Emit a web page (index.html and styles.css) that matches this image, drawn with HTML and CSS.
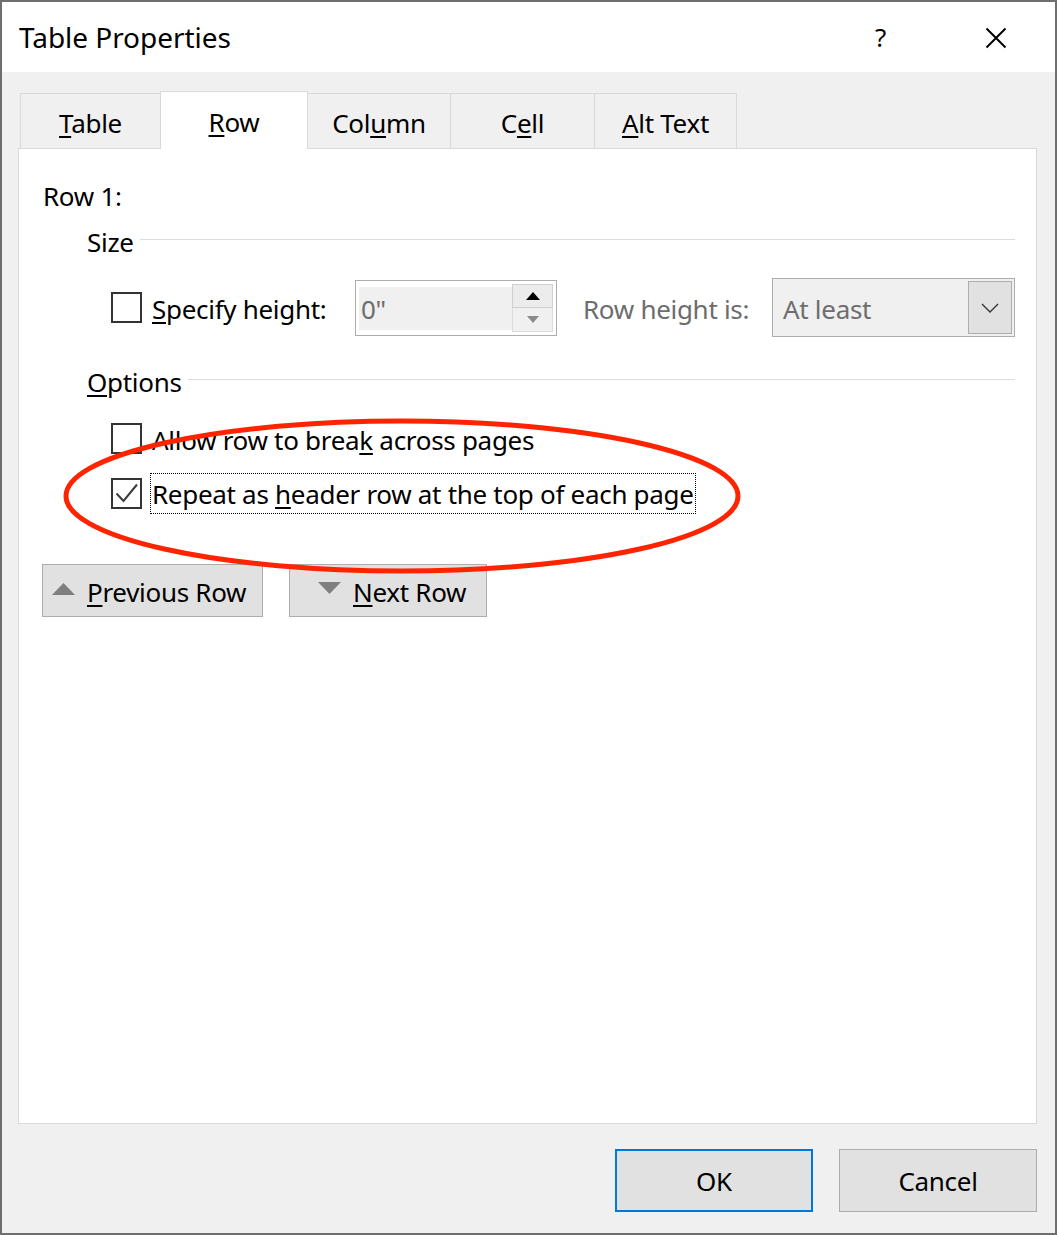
FILE: index.html
```html
<!DOCTYPE html>
<html>
<head>
<meta charset="utf-8">
<link rel="stylesheet" href="styles.css">
</head>
<body>
<div class="dialog">
  <div class="titlebar">
    <span class="title">Table Properties</span>
    <span class="help">?</span>
    <span class="close"><svg width="22" height="22" viewBox="0 0 22 22"><path d="M1.5 1.5 L20.5 20.5 M20.5 1.5 L1.5 20.5" stroke="#000" stroke-width="2" fill="none"/></svg></span>
  </div>
  <div class="body">
    <div class="tabs">
      <div class="tab t-table"><u>T</u>able</div>
      <div class="tab t-row active"><u>R</u>ow</div>
      <div class="tab t-col">Col<u>u</u>mn</div>
      <div class="tab t-cell">C<u>e</u>ll</div>
      <div class="tab t-alt"><u>A</u>lt Text</div>
    </div>
    <div class="panel">
      <div class="rowlabel">Row 1:</div>
      <div class="group">
        <div class="group-head size-head"><span>Size</span><span class="rule"></span></div>
        <div class="size-row">
          <div class="check size-check"><span class="box"></span><span class="lbl"><u>S</u>pecify height:</span></div>
          <div class="spin">
            <span class="spin-val">0"</span>
            <span class="spin-btns">
              <span class="spin-up"><svg width="14" height="8" viewBox="0 0 14 8"><path d="M0 8 L7 0 L14 8 Z" fill="#000"/></svg></span>
              <span class="spin-down"><svg width="12" height="7" viewBox="0 0 12 7"><path d="M0 0 L12 0 L6 7 Z" fill="#8a8a8a"/></svg></span>
            </span>
          </div>
          <span class="dim rh-label">Row height is:</span>
          <div class="select">
            <span class="select-val">At least</span>
            <span class="select-btn"><svg width="18" height="10" viewBox="0 0 18 10"><path d="M1 1 L9 9 L17 1" stroke="#333" stroke-width="1.3" fill="none"/></svg></span>
          </div>
        </div>
        <div class="group-head opt-head"><span><u>O</u>ptions</span><span class="rule"></span></div>
        <div class="check opt-check first"><span class="box"></span><span class="lbl">Allow row to brea<u>k</u> across pages</span></div>
        <div class="check opt-check second"><span class="box"><svg width="27" height="27" viewBox="0 0 27 27"><path d="M3.5 13.5 L10.5 21 L24 4.5" stroke="#3c3c3c" stroke-width="2" fill="none"/></svg></span><span class="lbl focus">Repeat as <u>h</u>eader row at the top of each page</span></div>
      </div>
      <div class="nav-row">
        <button class="navbtn prev"><svg width="23" height="12" viewBox="0 0 23 12"><path d="M0 12 L11.5 0 L23 12 Z" fill="#7f7f7f"/></svg><span><u>P</u>revious Row</span></button>
        <button class="navbtn next"><svg width="23" height="12" viewBox="0 0 23 12"><path d="M0 0 L23 0 L11.5 12 Z" fill="#7f7f7f"/></svg><span><u>N</u>ext Row</span></button>
      </div>
      <svg class="ellipse" width="690" height="166" viewBox="0 0 690 166"><ellipse cx="345" cy="83" rx="336" ry="75" fill="none" stroke="#ff2400" stroke-width="5"/></svg>
    </div>
    <div class="footer">
      <button class="btn ok">OK</button>
      <button class="btn cancel">Cancel</button>
    </div>
  </div>
</div>
</body>
</html>
```
FILE: styles.css
```css
* { box-sizing: border-box; }
html, body { margin: 0; padding: 0; }
body {
  background: #6e6e6e;
  font-family: "Noto Sans", "Open Sans", sans-serif;
  font-size: 26px;
  letter-spacing: -0.3px;
  color: #000;
  width: 1057px;
  height: 1235px;
  overflow: hidden;
}
u { text-decoration-thickness: 2px; text-underline-offset: 3px; }
.dialog {
  margin: 2px 0 0 2px;
  width: 1053px;
  height: 1231px;
  background: #f0f0f0;
  display: flex;
  flex-direction: column;
}
.titlebar {
  height: 70px;
  background: #fff;
  display: flex;
  align-items: center;
  padding-left: 17px;
}
.title { font-size: 28px; letter-spacing: -0.05px; flex: 1; }
.help { font-size: 26px; width: 110px; }
.close { width: 70px; display: flex; align-items: center; padding-top: 2px; }
.body {
  flex: 1;
  display: flex;
  flex-direction: column;
  padding: 19px 18px 21px 16px;
}
.tabs {
  display: flex;
  align-items: flex-end;
  padding-left: 2px;
  height: 57px;
  position: relative;
  z-index: 2;
}
.tab {
  height: 55px;
  border: 1px solid #d9d9d9;
  border-bottom: none;
  border-right: none;
  text-align: center;
  line-height: 56px;
  padding-top: 1px;
  background: #f0f0f0;
}
.tab.t-alt { border-right: 1px solid #d9d9d9; }
.tab.active {
  height: 58px;
  background: #fff;
  border-right: 1px solid #d9d9d9;
  margin-bottom: -1px;
  line-height: 60px;
  padding-top: 0;
}
.tab.active + .tab { border-left: none; }
.t-table { width: 140px; }
.t-row { width: 148px; }
.t-col { width: 142px; }
.t-cell { width: 144px; }
.t-alt { width: 143px; }
.panel {
  position: relative;
  height: 976px;
  background: #fff;
  border: 1px solid #d9d9d9;
  padding: 29px 21px 0 24px;
}
.rowlabel { line-height: 36px; }
.group { padding-left: 44px; }
.group-head {
  display: flex;
  align-items: center;
  line-height: 36px;
}
.group-head .rule {
  flex: 1;
  height: 1px;
  background: #dcdcdc;
  margin-left: 6px;
  margin-top: -5px;
}
.size-head { margin-top: 10px; }
.size-row {
  margin-top: 18px;
  height: 59px;
  display: flex;
  align-items: center;
}
.check {
  display: flex;
  align-items: center;
  padding-left: 24px;
}
.box {
  width: 31px;
  height: 31px;
  border: 2px solid #333;
  background: #fff;
  display: flex;
  align-items: center;
  justify-content: center;
  flex: none;
}
.lbl { margin-left: 10px; line-height: 37px; }
.size-check { width: 268px; }
.size-check .lbl { padding-top: 3px; }
.spin {
  width: 202px;
  height: 56px;
  border: 1px solid #adadad;
  background: #fff;
  padding: 3px;
  display: flex;
}
.spin-val {
  flex: 1;
  background: #f0f0f0;
  color: #6d6d6d;
  line-height: 44px;
  padding-left: 2px;
  margin: 3px 0 2px 0;
}
.spin-btns {
  width: 41px;
  display: flex;
  flex-direction: column;
}
.spin-up, .spin-down {
  flex: 1;
  display: flex;
  align-items: center;
  justify-content: center;
  border: 1px solid #dcdcdc;
  background: #f0f0f0;
}
.spin-up { background: #ececec; border-color: #cfcfcf; }
.spin-down { border-top: none; }
.dim { color: #6d6d6d; }
.rh-label { width: 215px; padding-left: 26px; padding-top: 3px; }
.select {
  width: 243px;
  height: 59px;
  border: 1px solid #adadad;
  background: #f0f0f0;
  display: flex;
  padding: 2px;
}
.select-val { flex: 1; color: #6d6d6d; line-height: 53px; padding-left: 8px; padding-top: 2px; }
.select-btn {
  width: 44px;
  background: #e1e1e1;
  border: 1px solid #adadad;
  display: flex;
  align-items: center;
  justify-content: center;
}
.opt-head { margin-top: 27px; }
.opt-check { height: 39px; }
.opt-check.first { margin-top: 19px; }
.opt-check.second { margin-top: 16px; }
.opt-check .lbl { padding-top: 3px; }
.lbl.focus { border: 1px dotted #000; margin-left: 8px; padding: 2px 1px 0 1px; }
.nav-row {
  display: flex;
  gap: 26px;
  margin-top: 51px;
  margin-left: -1px;
}
.navbtn {
  font: inherit;
  letter-spacing: inherit;
  color: #000;
  height: 53px;
  background: #e1e1e1;
  border: 1px solid #adadad;
  display: flex;
  align-items: center;
  gap: 12px;
  padding: 2px 0 0 0;
}
.navbtn.prev { width: 221px; padding-left: 9px; }
.navbtn.next { width: 198px; padding-left: 28px; }
.navbtn.prev svg { margin-top: -6px; }
.navbtn.next svg { margin-top: -8px; }
.ellipse {
  position: absolute;
  left: 38px;
  top: 264px;
}
.footer {
  margin-top: 25px;
  display: flex;
  justify-content: flex-end;
  gap: 26px;
}
.btn {
  font: inherit;
  letter-spacing: inherit;
  color: #000;
  width: 198px;
  height: 63px;
  background: #e1e1e1;
  border: 1px solid #adadad;
  padding: 0;
}
.btn.ok { border: 2px solid #0078d7; }
```
